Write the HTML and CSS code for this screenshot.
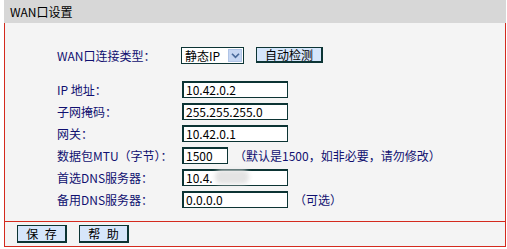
FILE: index.html
```html
<!DOCTYPE html>
<html lang="zh-CN">
<head>
    <meta charset="UTF-8">
    <title>WAN口设置</title>
    <link rel="stylesheet" href="styles.css">
</head>
<body>
    <div class="panel">
        <div class="title">WAN口设置</div>
        <div class="form">
            <div class="row first">
                <span class="label">WAN口连接类型：</span>
                <span class="select">静态IP<span class="arrow"><svg viewBox="0 0 10 8" width="9" height="7"><path d="M1 2 L5 6 L9 2" fill="none" stroke="#4a6a9a" stroke-width="2"/></svg></span></span>
                <span class="btn detect">自动检测</span>
            </div>
            <div class="row">
                <span class="label">IP 地址：</span>
                <span class="field">10.42.0.2</span>
            </div>
            <div class="row">
                <span class="label">子网掩码：</span>
                <span class="field">255.255.255.0</span>
            </div>
            <div class="row">
                <span class="label">网关：</span>
                <span class="field">10.42.0.1</span>
            </div>
            <div class="row">
                <span class="label">数据包MTU（字节）：</span>
                <span class="field short">1500</span>
                <span class="note">（默认是1500，如非必要，请勿修改）</span>
            </div>
            <div class="row">
                <span class="label">首选DNS服务器：</span>
                <span class="field">10.4.<span class="blur"></span></span>
            </div>
            <div class="row">
                <span class="label">备用DNS服务器：</span>
                <span class="field">0.0.0.0</span>
                <span class="note">（可选）</span>
            </div>
        </div>
        <div class="actions">
            <span class="btn wide">保 存</span>
            <span class="btn wide">帮 助</span>
        </div>
    </div>
</body>
</html>
```

FILE: styles.css
```css
body {
    margin: 0;
    background: #fff;
    font-family: "Noto Sans CJK SC", sans-serif;
    font-size: 12px;
}

.panel {
    margin-left: 4px;
    width: 502px;
}

.title {
    height: 23px;
    line-height: 23px;
    padding-left: 6px;
    background: #d7d7d7;
    color: #000;
}

.form {
    background: #f4f4f4;
    border-left: 1px solid #d42a1e;
    border-right: 1px solid #d42a1e;
    border-bottom: 1px solid #d42a1e;
    padding: 21px 0 11px 52px;
}

.row {
    display: flex;
    align-items: center;
    height: 22px;
}

.row.first {
    margin-bottom: 12px;
}

.label {
    width: 125px;
    color: #101070;
}

.field {
    box-sizing: border-box;
    width: 106px;
    height: 17px;
    line-height: 15px;
    padding-left: 3px;
    background: #fff;
    border: 1px solid #0c3434;
    box-shadow: inset 1px 1px 0 #0c3434;
    color: #000;
    display: flex;
    align-items: center;
}

.field.short {
    width: 46px;
}

.blur {
    display: inline-block;
    width: 34px;
    height: 14px;
    margin-left: 2px;
    background: #e4e4e4;
    border-radius: 6px;
    filter: blur(2px);
}

.note {
    margin-left: 6px;
    color: #101070;
}

.select {
    box-sizing: border-box;
    width: 63px;
    height: 17px;
    margin-left: -1px;
    padding-left: 3px;
    background: #fff;
    border: 1px solid #0c3434;
    display: flex;
    align-items: center;
    justify-content: space-between;
    color: #000;
}

.arrow {
    width: 14px;
    height: 13px;
    margin-right: 1px;
    background: #c6d6f2;
    border: 1px solid #b0c4e6;
    box-sizing: border-box;
    display: flex;
    align-items: center;
    justify-content: center;
}

.btn {
    box-sizing: border-box;
    display: inline-flex;
    align-items: center;
    justify-content: center;
    width: 50px;
    height: 18px;
    background: #d6e6fb;
    border: 2px solid #0c3434;
    border-width: 1px 2px 2px 1px;
    color: #000;
}

.btn.wide {
    word-spacing: 4px;
}

.btn.detect {
    width: 67px;
    height: 16px;
    margin-left: 12px;
}

.actions {
    height: 24px;
    background: #f4f4f4;
    border-left: 1px solid #d42a1e;
    border-right: 1px solid #d42a1e;
    border-bottom: 1px solid #d42a1e;
    display: flex;
    align-items: center;
    gap: 12px;
    padding-left: 12px;
}
```
